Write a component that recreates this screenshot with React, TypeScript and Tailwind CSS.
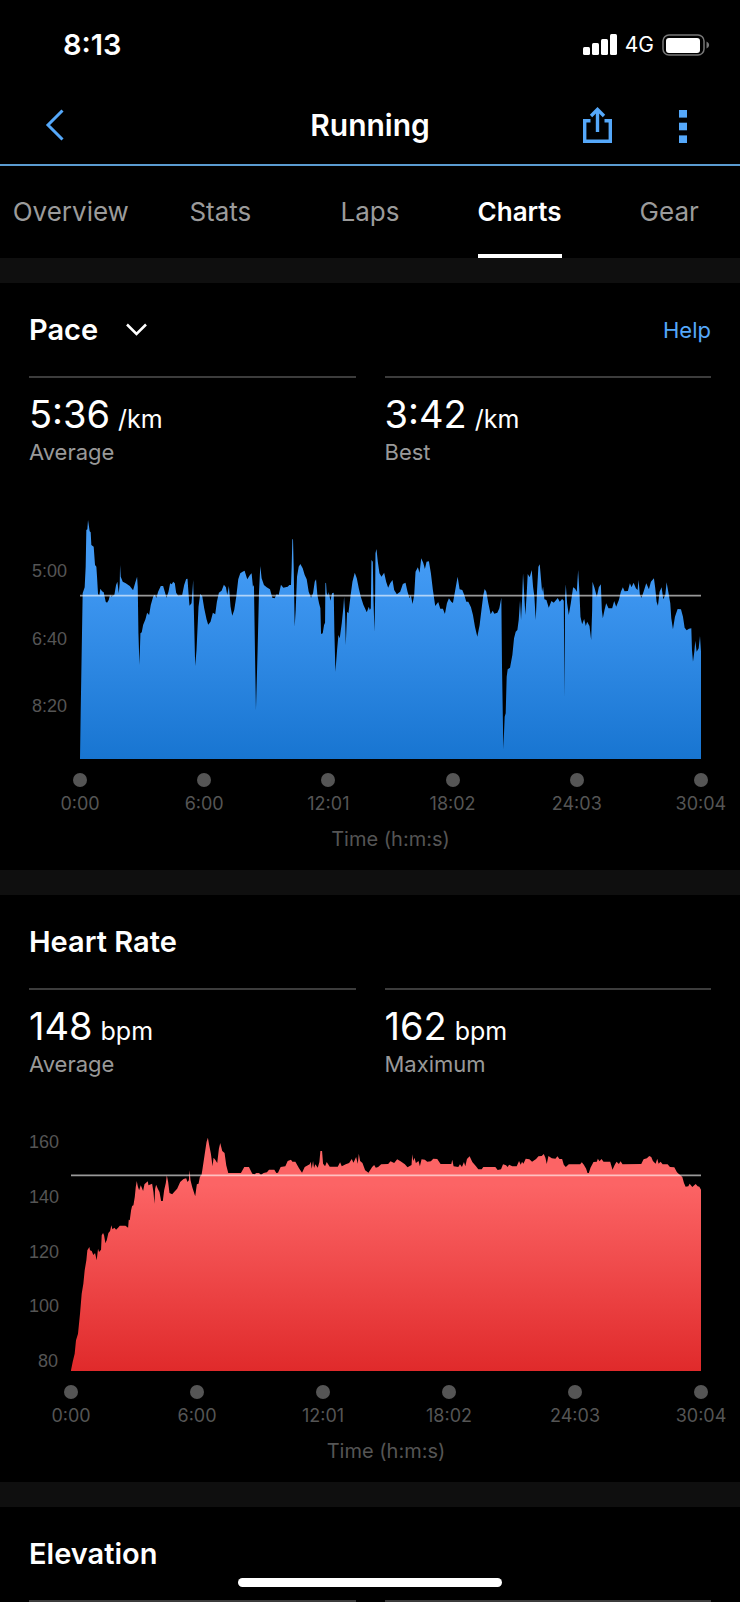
import { useState } from "react";

const TABS = ["Overview", "Stats", "Laps", "Charts", "Gear"];
const TIMES = ["0:00", "6:00", "12:01", "18:02", "24:03", "30:04"];

const PACE_POINTS =
  "0,717 2,580 6,340 8,220 14,202 17,140 19,30 22,28 24,0 27,20 29,34 32,37 34,75 41,80 45,135 49,140 51,170 54,223 58,225 61,206 66,214 71,217 77,245 81,248 86,240 90,224 94,230 103,224 108,195 112,185 116,220 119,190 120,135 122,170 128,185 137,190 149,198 159,211 165,190 171,170 173,200 175,340 178,435 181,340 185,337 189,315 196,298 201,278 207,285 212,255 219,230 223,224 229,233 234,215 242,198 249,198 254,215 259,233 265,215 270,190 275,193 279,185 284,190 288,218 294,227 306,225 312,195 318,177 322,176 325,220 328,257 334,250 337,210 339,180 341,270 345,438 349,390 355,260 360,222 366,228 372,265 379,298 384,314 391,305 398,278 405,283 410,245 416,218 424,212 431,194 437,202 441,225 446,198 451,260 456,287 462,270 468,230 474,178 480,160 487,155 493,152 501,178 509,165 514,160 518,200 521,195 524,390 527,570 532,390 536,220 540,138 544,175 551,195 559,202 569,208 576,233 583,235 589,223 595,225 602,194 609,203 622,200 627,195 632,195 634,140 636,58 638,58 640,140 643,320 646,270 650,170 655,140 660,132 667,145 673,165 679,178 685,215 692,233 698,220 703,185 707,178 711,225 716,250 720,265 722,342 727,340 731,315 734,308 735,188 737,190 739,220 743,227 745,216 750,242 755,220 760,218 762,340 765,455 770,390 774,345 778,355 784,310 789,260 791,230 794,280 796,375 800,275 804,280 810,230 816,185 823,158 829,175 835,205 841,230 849,255 859,277 865,260 868,270 871,265 873,120 877,125 879,240 882,335 884,230 885,100 888,87 892,125 897,160 903,170 911,158 917,185 923,203 929,190 936,180 941,210 949,223 959,215 967,192 975,188 981,215 987,235 991,225 996,252 1001,225 1005,155 1012,142 1017,158 1022,115 1028,128 1033,147 1038,125 1045,124 1051,160 1057,210 1064,258 1073,246 1079,266 1087,266 1093,282 1099,250 1105,235 1112,245 1117,249 1123,215 1131,170 1137,208 1145,210 1151,225 1157,245 1163,245 1171,262 1177,285 1183,320 1190,350 1197,315 1203,265 1208,225 1212,207 1217,215 1223,250 1230,283 1236,272 1241,281 1250,278 1256,265 1262,233 1264,440 1268,688 1272,590 1275,580 1278,470 1281,448 1288,443 1295,405 1300,355 1305,335 1310,330 1314,300 1318,240 1321,300 1324,240 1327,160 1330,215 1334,285 1338,220 1341,162 1347,172 1353,150 1357,200 1361,230 1365,300 1369,210 1373,140 1377,133 1381,180 1384,215 1387,200 1391,238 1397,240 1404,263 1412,243 1419,248 1431,234 1437,245 1444,237 1449,242 1451,530 1453,230 1455,193 1459,250 1464,285 1470,250 1477,202 1483,206 1488,215 1492,150 1496,220 1499,290 1504,313 1510,297 1515,318 1519,305 1526,318 1531,360 1534,270 1535,185 1541,203 1548,230 1554,202 1560,193 1563,270 1566,295 1571,270 1576,250 1583,265 1594,265 1600,243 1606,260 1614,240 1620,215 1626,202 1631,214 1641,213 1647,190 1652,202 1658,188 1665,205 1670,210 1673,180 1677,225 1682,233 1688,215 1696,190 1704,208 1710,185 1719,175 1723,205 1727,245 1731,257 1736,215 1742,202 1747,238 1753,225 1757,187 1762,215 1768,250 1771,295 1776,328 1782,290 1790,267 1800,268 1806,290 1811,323 1817,331 1824,326 1831,325 1833,390 1836,425 1840,395 1843,362 1847,395 1853,385 1857,348 1860,395 1860,717";

const HEART_POINTS =
  "0,702 0,700 5,675 11,650 15,610 21,590 27,530 32,470 37,440 41,400 46,370 49,340 55,330 57,340 62,342 67,354 72,348 77,370 81,335 84,345 90,338 92,295 96,288 99,295 103,318 107,310 112,288 117,282 121,265 124,277 130,272 135,278 141,272 146,266 163,266 171,272 173,248 176,250 180,220 183,207 187,205 191,180 194,150 197,132 200,148 204,160 209,145 216,162 220,142 230,133 232,145 243,140 247,165 250,200 252,155 255,143 260,155 265,165 270,192 275,192 279,160 284,138 287,115 291,135 295,168 303,172 311,163 318,155 327,135 337,126 345,124 349,135 353,130 355,100 358,130 363,150 372,178 377,142 382,140 386,120 391,113 394,95 400,55 406,15 410,2 414,25 419,50 424,88 427,62 432,68 438,78 443,35 447,18 453,42 460,48 465,85 471,108 509,108 519,90 533,90 543,110 550,112 555,108 563,108 569,113 577,108 587,106 593,98 609,98 615,108 620,107 628,90 642,88 649,72 659,68 663,74 672,74 683,94 692,107 700,90 715,82 718,74 721,95 725,72 728,93 732,82 739,92 744,75 747,42 752,42 755,80 761,88 766,75 775,89 799,89 806,76 811,88 823,82 833,78 841,66 846,77 854,60 859,80 862,50 866,72 873,78 881,100 891,107 902,90 908,84 913,92 920,90 929,82 950,81 957,73 968,78 977,67 987,73 1000,82 1008,91 1020,84 1022,52 1025,72 1029,62 1033,78 1041,72 1045,88 1050,67 1060,68 1067,74 1078,73 1085,65 1097,66 1107,81 1139,81 1142,68 1146,88 1160,90 1165,82 1171,90 1177,75 1181,88 1186,66 1194,58 1202,75 1213,88 1220,97 1230,97 1235,90 1271,90 1278,99 1288,97 1294,82 1303,85 1308,90 1312,83 1322,88 1335,88 1342,72 1347,83 1351,74 1355,80 1362,65 1373,67 1381,74 1393,66 1400,58 1410,57 1416,51 1421,62 1425,81 1430,57 1440,64 1451,65 1457,58 1463,66 1471,66 1476,83 1482,90 1491,82 1525,82 1530,76 1536,83 1543,95 1547,108 1551,108 1556,92 1565,75 1575,74 1578,65 1583,73 1589,66 1595,74 1615,74 1622,98 1628,85 1634,74 1641,81 1646,73 1652,82 1708,81 1715,67 1725,64 1732,57 1738,60 1743,72 1751,80 1756,65 1760,80 1766,74 1772,82 1787,82 1794,90 1807,91 1815,106 1825,115 1831,120 1836,138 1841,149 1849,148 1853,140 1861,150 1871,141 1877,148 1882,149 1887,158 1887,702";

function StatusBar() {
  return (
    <div className="flex h-[89px] items-center justify-between pr-[30px] pl-[63px]">
      <span className="text-[29px] leading-8 font-semibold">8:13</span>
      <div className="flex items-center gap-2">
        <svg width="34" height="21" viewBox="0 0 34 21" fill="#fff" aria-hidden="true">
          <rect x="0" y="13" width="7" height="8" rx="1.5" />
          <rect x="9" y="9" width="7" height="12" rx="1.5" />
          <rect x="18" y="5" width="7" height="16" rx="1.5" />
          <rect x="27" y="0" width="7" height="21" rx="1.5" />
        </svg>
        <span className="text-[21px] leading-6">4G</span>
        <svg width="48" height="22" viewBox="0 0 48 22" aria-hidden="true">
          <rect x="1" y="1" width="41" height="20" rx="6" fill="none" stroke="#777" strokeWidth="1.5" />
          <rect x="4" y="4" width="34" height="15" rx="3" fill="#fff" />
          <path d="M44.5 7.5C48 9 48 13 44.5 14.5Z" fill="#777" />
        </svg>
      </div>
    </div>
  );
}

function Header() {
  return (
    <header className="grid h-[77px] grid-cols-[1fr_auto_1fr] items-center border-b-2 border-[#5a9bd0] pb-[3px] text-[#55a8fa]">
      <button aria-label="Back" className="ml-[45px] justify-self-start">
        <svg width="19" height="32" viewBox="0 0 19 32" fill="none" stroke="currentColor" strokeWidth="3">
          <path d="M17.5 1.5L3 16L17.5 30.5" />
        </svg>
      </button>
      <h1 className="text-[30px] leading-9 font-semibold text-white">Running</h1>
      <div className="mr-[53px] flex items-end gap-[67px] justify-self-end">
        <button aria-label="Share">
          <svg width="29" height="36" viewBox="0 0 29 36" fill="none" stroke="currentColor" strokeWidth="3.4">
            <path d="M7.5 13.7H1.7V34.3H27.3V13.7H21.5" />
            <path d="M14.5 3V25" />
            <path d="M8 9L14.5 2.5L21 9" />
          </svg>
        </button>
        <button aria-label="More">
          <svg width="8" height="33" viewBox="0 0 8 33" fill="currentColor">
            <rect width="8" height="7.6" />
            <rect y="12.7" width="8" height="7.6" />
            <rect y="25.4" width="8" height="7.6" />
          </svg>
        </button>
      </div>
    </header>
  );
}

function TabBar() {
  const [active, setActive] = useState("Charts");

  return (
    <nav className="overflow-hidden">
      <div className="-mx-1 grid h-[92px] grid-cols-5">
        {TABS.map((tab) => (
          <button key={tab} onClick={() => setActive(tab)} className="flex justify-center">
            <span
              className={
                tab === active
                  ? "flex h-full items-center border-b-4 border-white pt-[3px] text-[26px] leading-8 font-semibold text-white"
                  : "flex h-full items-center border-b-4 border-transparent pt-[3px] text-[26px] leading-8 text-[#9b9b9b]"
              }
            >
              {tab}
            </span>
          </button>
        ))}
      </div>
    </nav>
  );
}

function Divider() {
  return <div className="h-[25px] bg-[#0f0f0f]" />;
}

type StatProps = { value: string; unit: string; label: string };

function Stat({ value, unit, label }: StatProps) {
  return (
    <div className="border-t-2 border-[#3c3c3c] pt-[13px]">
      <p className="text-[38px] leading-[47px]">
        {value}
        <span className="ml-2 text-[25px] leading-none">{unit}</span>
      </p>
      <p className="text-[22px] leading-7 text-[#999]">{label}</p>
    </div>
  );
}

type ChartProps = {
  id: string;
  points: string;
  viewBox: string;
  averageY: number;
  from: string;
  to: string;
  labels: string[];
  axisClass: string;
};

function AreaChart({ id, points, viewBox, averageY, from, to, labels, axisClass }: ChartProps) {
  return (
    <div className="mt-[54px] mr-[10px] flex text-[#555]">
      <div
        className={`flex h-[239px] shrink-0 flex-col justify-between text-right font-['Liberation_Sans',sans-serif] text-[18px] leading-5 ${axisClass}`}
      >
        {labels.map((label) => (
          <span key={label}>{label}</span>
        ))}
      </div>
      <div className="min-w-0 flex-1">
        <svg className="block h-[239px] w-full" viewBox={viewBox} preserveAspectRatio="none" aria-hidden="true">
          <defs>
            <linearGradient id={id} x1="0" y1="0" x2="0" y2="1">
              <stop offset="0.2" stopColor={from} />
              <stop offset="1" stopColor={to} />
            </linearGradient>
          </defs>
          <polygon points={points} fill={`url(#${id})`} />
          <path d={`M0 ${averageY}H1890`} stroke="#fff" strokeOpacity="0.6" strokeWidth="5" />
        </svg>
        <div className="mt-[14px] flex justify-between">
          {TIMES.map((time) => (
            <div key={time} className="flex w-0 flex-col items-center gap-[5px] whitespace-nowrap">
              <span className="size-[14px] shrink-0 rounded-full bg-[#555]" />
              <span className="text-[18px] leading-6">{time}</span>
            </div>
          ))}
        </div>
        <p className="mt-[9px] text-center text-[20px] leading-7">Time (h:m:s)</p>
      </div>
    </div>
  );
}

export default function App() {
  return (
    <div className="min-h-screen overflow-hidden bg-black font-['Inter',sans-serif] text-white">
      <StatusBar />
      <Header />
      <TabBar />
      <Divider />

      {/* ── Pace ── */}
      <section className="px-[29px] pb-[17px]">
        <div className="flex h-[93px] items-center justify-between">
          <button className="flex items-center gap-7">
            <h2 className="text-[29px] leading-9 font-semibold">Pace</h2>
            <svg width="21" height="13" viewBox="0 0 21 13" fill="none" stroke="#fff" strokeWidth="2.5" aria-hidden="true">
              <path d="M1 1.5L10.5 11L20 1.5" />
            </svg>
          </button>
          <a href="#help" className="text-[22px] leading-7 text-[#55a8fa]">Help</a>
        </div>
        <div className="grid grid-cols-2 gap-[29px]">
          <Stat value="5:36" unit="/km" label="Average" />
          <Stat value="3:42" unit="/km" label="Best" />
        </div>
        <AreaChart
          id="pace-fill"
          points={PACE_POINTS}
          viewBox="0 0 1860 717"
          averageY={227}
          from="#429af4"
          to="#1875d1"
          labels={["5:00", "6:40", "8:20"]}
          axisClass="w-[51px] pt-[41px] pr-[13px] pb-[43px]"
        />
      </section>
      <Divider />

      {/* ── Heart rate ── */}
      <section className="px-[29px] pb-[17px]">
        <div className="flex h-[93px] items-center">
          <h2 className="text-[29px] leading-9 font-semibold">Heart Rate</h2>
        </div>
        <div className="grid grid-cols-2 gap-[29px]">
          <Stat value="148" unit="bpm" label="Average" />
          <Stat value="162" unit="bpm" label="Maximum" />
        </div>
        <AreaChart
          id="heart-fill"
          points={HEART_POINTS}
          viewBox="0 -15 1887 717"
          averageY={115}
          from="#fc6465"
          to="#e02a2b"
          labels={["160", "140", "120", "100", "80"]}
          axisClass="w-[42px] pr-[13px]"
        />
      </section>
      <Divider />

      {/* ── Elevation ── */}
      <section className="px-[29px]">
        <div className="flex h-[93px] items-center">
          <h2 className="text-[29px] leading-9 font-semibold">Elevation</h2>
        </div>
        <div className="grid grid-cols-2 gap-[29px]">
          <div className="border-t-2 border-[#3c3c3c]" />
          <div className="border-t-2 border-[#3c3c3c]" />
        </div>
      </section>

      {/* Home indicator */}
      <div className="fixed bottom-[15px] left-1/2 h-[9px] w-[264px] -translate-x-1/2 rounded-full bg-white" />
    </div>
  );
}
